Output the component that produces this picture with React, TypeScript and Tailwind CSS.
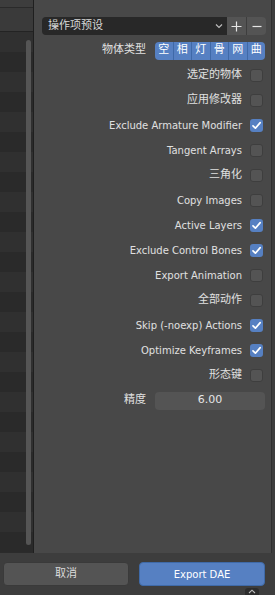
import React from 'react';

const font = { fontFamily: '"DejaVu Sans", "Noto Sans CJK SC", sans-serif' };

const Check = () => (
  <svg width="11" height="11" viewBox="0 0 11 11">
    <path d="M2 5.8 L4.4 8.2 L9.2 2.6" fill="none" stroke="#ffffff" strokeWidth="1.7" strokeLinecap="round" strokeLinejoin="round" />
  </svg>
);

const CheckRow = ({ label, checked, cjk }: { label: string; checked?: boolean; cjk?: boolean }) => (
  <div className="flex h-[25px] items-center justify-end pr-[8px]">
    <span className={cjk ? 'text-[11px] text-[#e0e0e0] mr-[8px]' : 'text-[10px] text-[#e0e0e0] mr-[8px]'}>{label}</span>
    {checked ? (
      <div className="w-[13px] h-[13px] rounded-[3px] bg-[#5680c2] flex items-center justify-center">
        <Check />
      </div>
    ) : (
      <div className="w-[13px] h-[13px] rounded-[3px] bg-[#545454] border border-[#3e3e3e]" />
    )}
  </div>
);

export default function App() {
  const stripes = Array.from({ length: 26 });
  const options = [
    { label: '选定的物体', cjk: true },
    { label: '应用修改器', cjk: true },
    { label: 'Exclude Armature Modifier', checked: true },
    { label: 'Tangent Arrays' },
    { label: '三角化', cjk: true },
    { label: 'Copy Images' },
    { label: 'Active Layers', checked: true },
    { label: 'Exclude Control Bones', checked: true },
    { label: 'Export Animation' },
    { label: '全部动作', cjk: true },
    { label: 'Skip (-noexp) Actions', checked: true },
    { label: 'Optimize Keyframes', checked: true },
    { label: '形态键', cjk: true },
  ];
  const types = ['空', '相', '灯', '骨', '网', '曲'];

  return (
    <div className="w-[275px] h-[595px] flex flex-col bg-[#3d3d3d] overflow-hidden" style={font}>
      <div className="flex h-[553px]">
        {/* file list */}
        <div className="w-[33px] flex flex-col bg-[#2b2b2b] relative">
          <div className="h-[8px] bg-[#3d3d3d] border-b border-[#2a2a2a]" />
          <div className="h-[24px] bg-[#3a3a3a] border-b border-[#232323]" />
          <div className="flex-1 flex flex-col overflow-hidden">
            {stripes.map((_, i) => (
              <div key={i} className={i % 2 === 0 ? 'h-[20px] shrink-0 bg-[#303030]' : 'h-[20px] shrink-0 bg-[#2a2a2a]'} />
            ))}
          </div>
          <div className="absolute left-[26px] top-[40px] w-[5px] h-[505px] rounded-full bg-[#555555]" />
        </div>
        <div className="w-[1px] bg-[#1f1f1f]" />

        {/* properties */}
        <div className="flex-1 bg-[#484848] flex flex-col pt-[17px]">
          <div className="flex h-[18px] ml-[8px] mr-[5px]">
            <div className="flex-1 bg-[#282828] rounded-l-[4px] flex items-center justify-between pl-[6px] pr-[4px]">
              <span className="text-[11px] text-[#d8d8d8]">操作项预设</span>
              <svg width="8" height="6" viewBox="0 0 8 6">
                <path d="M1 1.5 L4 4.5 L7 1.5" fill="none" stroke="#bdbdbd" strokeWidth="1.2" />
              </svg>
            </div>
            <div className="w-[20px] bg-[#545454] border-r border-[#3e3e3e] flex items-center justify-center">
              <svg width="11" height="11" viewBox="0 0 11 11">
                <path d="M5.5 0.5 V10.5 M0.5 5.5 H10.5" stroke="#e6e6e6" strokeWidth="1.2" />
              </svg>
            </div>
            <div className="w-[19px] bg-[#545454] rounded-r-[4px] flex items-center justify-center">
              <svg width="10" height="10" viewBox="0 0 10 10">
                <path d="M0.5 5.5 H9.5" stroke="#e6e6e6" strokeWidth="1.2" />
              </svg>
            </div>
          </div>

          <div className="flex h-[25px] items-center mt-[3px]">
            <span className="w-[112px] text-right text-[11px] text-[#e0e0e0]">物体类型</span>
            <div className="ml-[9px] w-[110px] h-[18px] flex rounded-[4px] overflow-hidden bg-[#5680c2]">
              {types.map((t, i) => (
                <div
                  key={t}
                  className={
                    i === 0
                      ? 'flex-1 flex items-center justify-center text-[11px] text-white'
                      : 'flex-1 flex items-center justify-center text-[11px] text-white border-l border-[#3f69a8]'
                  }
                >
                  {t}
                </div>
              ))}
            </div>
          </div>

          {options.map((o) => (
            <CheckRow key={o.label} label={o.label} checked={o.checked} cjk={o.cjk} />
          ))}

          <div className="flex h-[25px] items-center">
            <span className="w-[112px] text-right text-[11px] text-[#e0e0e0]">精度</span>
            <div className="ml-[9px] w-[110px] h-[18px] rounded-[4px] bg-[#545454] flex items-center justify-center text-[11px] text-[#e6e6e6]">
              6.00
            </div>
          </div>
        </div>
        <div className="w-[4px] bg-[#3d3d3d] border-l border-[#2f2f2f]" />
      </div>

      {/* bottom */}
      <div className="flex-1 flex items-start pt-[9px] pl-[3px] pr-[10px] gap-[10px] relative">
        <button className="w-[126px] h-[24px] rounded-[4px] bg-[#545454] border border-[#3a3a3a] text-[11px] text-[#dcdcdc]">
          取消
        </button>
        <button className="w-[126px] h-[24px] rounded-[4px] bg-[#5680c2] border border-[#3f6aa8] text-[10px] text-white">
          Export DAE
        </button>
        <div className="absolute left-[245px] bottom-0 w-[14px] h-[7px] rounded-t-[3px] bg-[#2c2c2c] flex items-center justify-center">
          <svg width="8" height="5" viewBox="0 0 8 5">
            <path d="M1 4 L4 1.2 L7 4" fill="none" stroke="#bdbdbd" strokeWidth="1.1" />
          </svg>
        </div>
      </div>
    </div>
  );
}
